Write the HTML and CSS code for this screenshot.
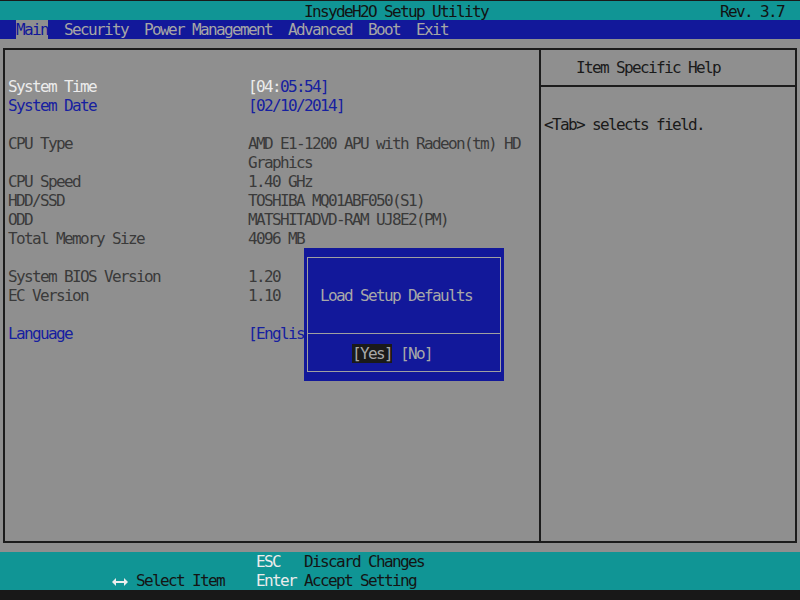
FILE: index.html
```html
<!DOCTYPE html>
<html lang="en">
<head>
<meta charset="utf-8">
<title>InsydeH2O Setup Utility</title>
<link rel="stylesheet" href="styles.css">
</head>
<body>
<div class="screen">
  <header class="titlebar">
    <span class="title">InsydeH2O Setup Utility</span>
    <span class="rev">Rev. 3.7</span>
  </header>
  <nav class="menubar">
    <span class="menu active">Main</span>
    <span class="menu">Security</span>
    <span class="menu">Power Management</span>
    <span class="menu">Advanced</span>
    <span class="menu">Boot</span>
    <span class="menu">Exit</span>
  </nav>
  <main class="panel">
    <section class="info">
      <div class="grid">
        <div class="label bright">System Time</div>
        <div class="value sel"><span class="bright">[04:</span>05:54]</div>
        <div class="label sel">System Date</div>
        <div class="value sel">[02/10/2014]</div>
        <div class="blank"></div>
        <div class="label">CPU Type</div>
        <div class="value">AMD E1-1200 APU with Radeon(tm) HD Graphics</div>
        <div class="label">CPU Speed</div>
        <div class="value">1.40 GHz</div>
        <div class="label">HDD/SSD</div>
        <div class="value">TOSHIBA MQ01ABF050(S1)</div>
        <div class="label">ODD</div>
        <div class="value">MATSHITADVD-RAM UJ8E2(PM)</div>
        <div class="label">Total Memory Size</div>
        <div class="value">4096 MB</div>
        <div class="blank"></div>
        <div class="label">System BIOS Version</div>
        <div class="value">1.20</div>
        <div class="label">EC Version</div>
        <div class="value">1.10</div>
        <div class="blank"></div>
        <div class="label sel">Language</div>
        <div class="value sel">[English]</div>
      </div>
    </section>
    <aside class="help">
      <div class="help-head">Item Specific Help</div>
      <div class="help-body">&lt;Tab&gt; selects field.</div>
    </aside>
  </main>
  <footer class="keys">
    <div class="key-desc"></div>
    <div class="key">ESC</div>
    <div class="key-desc">Discard Changes</div>
    <div class="key-desc"><svg class="arrow" width="16" height="10" viewBox="0 0 16 10"><path d="M0 5 L4 1 L4 4 L12 4 L12 1 L16 5 L12 9 L12 6 L4 6 L4 9 Z" fill="#eeeeee"/></svg>Select Item</div>
    <div class="key">Enter</div>
    <div class="key-desc">Accept Setting</div>
  </footer>
  <div class="strip"></div>

  <div class="dialog">
    <div class="dialog-box">
      <div class="dialog-msg">Load Setup Defaults</div>
      <div class="dialog-btns"><span class="btn active">[Yes]</span><span class="btn">[No]</span></div>
    </div>
  </div>
</div>
</body>
</html>
```

FILE: styles.css
```css
* { box-sizing: border-box; }

html, body {
  margin: 0;
  padding: 0;
}

body {
  width: 800px;
  height: 600px;
  overflow: hidden;
  background: #8f8f8f;
  font-family: "DejaVu Sans Mono", "Liberation Mono", monospace;
  font-size: 16px;
  letter-spacing: -1.633px;
  line-height: 19px;
  color: #3a3a3a;
}

.screen {
  position: relative;
  width: 800px;
  height: 600px;
  display: flex;
  flex-direction: column;
}

.titlebar {
  height: 20px;
  padding-top: 1px;
  border-top: 1px solid #1a1a1a;
  background: #109595;
  color: #121212;
  display: flex;
  white-space: pre;
}

.title { margin-left: 304px; }
.rev { margin-left: auto; margin-right: 16px; }

.menubar {
  height: 19px;
  background: #12189a;
  display: flex;
  align-items: flex-start;
  gap: 16px;
  padding-left: 16px;
  color: #a6a6a6;
  white-space: pre;
}

.menu { height: 19px; }

.menu.active {
  background: #8f8f8f;
  color: #12189a;
}

.panel {
  margin: 9px 3px 0 3px;
  height: 495px;
  border: 2px solid #1c1c1c;
  display: grid;
  grid-template-columns: 534px 1fr;
}

.info {
  padding: 27px 0 0 3px;
}

.grid {
  display: grid;
  grid-template-columns: 240px 288px;
}

.label, .value { white-space: normal; }
.blank { grid-column: 1 / -1; height: 19px; }

.bright { color: #ececec; }
.sel { color: #1620a0; }

.help {
  border-left: 2px solid #1c1c1c;
  display: flex;
  flex-direction: column;
}

.help-head {
  height: 37px;
  padding: 8px 0 0 35px;
  border-bottom: 2px solid #1c1c1c;
  color: #1a1a1a;
}

.help-body {
  padding: 28px 0 0 3px;
  color: #1a1a1a;
}

.keys {
  margin-top: 9px;
  height: 38px;
  background: #109595;
  display: grid;
  grid-template-columns: 144px 48px auto;
  grid-auto-rows: 19px;
  padding-left: 112px;
  color: #141414;
  white-space: pre;
}

.key { color: #ececec; }

.arrow {
  vertical-align: -1px;
  margin-right: 8px;
}

.strip {
  flex: 1;
  background: #181818;
}

.dialog {
  position: absolute;
  left: 304px;
  top: 248px;
  width: 200px;
  height: 133px;
  background: #12189a;
  padding: 9px 3px 9px 3px;
  color: #a8a8a8;
}

.dialog-box {
  height: 100%;
  border: 1px solid #a0a0a0;
  display: flex;
  flex-direction: column;
}

.dialog-msg {
  height: 76px;
  border-bottom: 1px solid #a0a0a0;
  padding: 28px 0 0 12px;
}

.dialog-btns {
  flex: 1;
  display: flex;
  align-items: center;
  gap: 8px;
  padding-left: 44px;
  padding-top: 1px;
  white-space: pre;
}

.btn { height: 19px; }
.btn.active { background: #1a1a1a; }
```
